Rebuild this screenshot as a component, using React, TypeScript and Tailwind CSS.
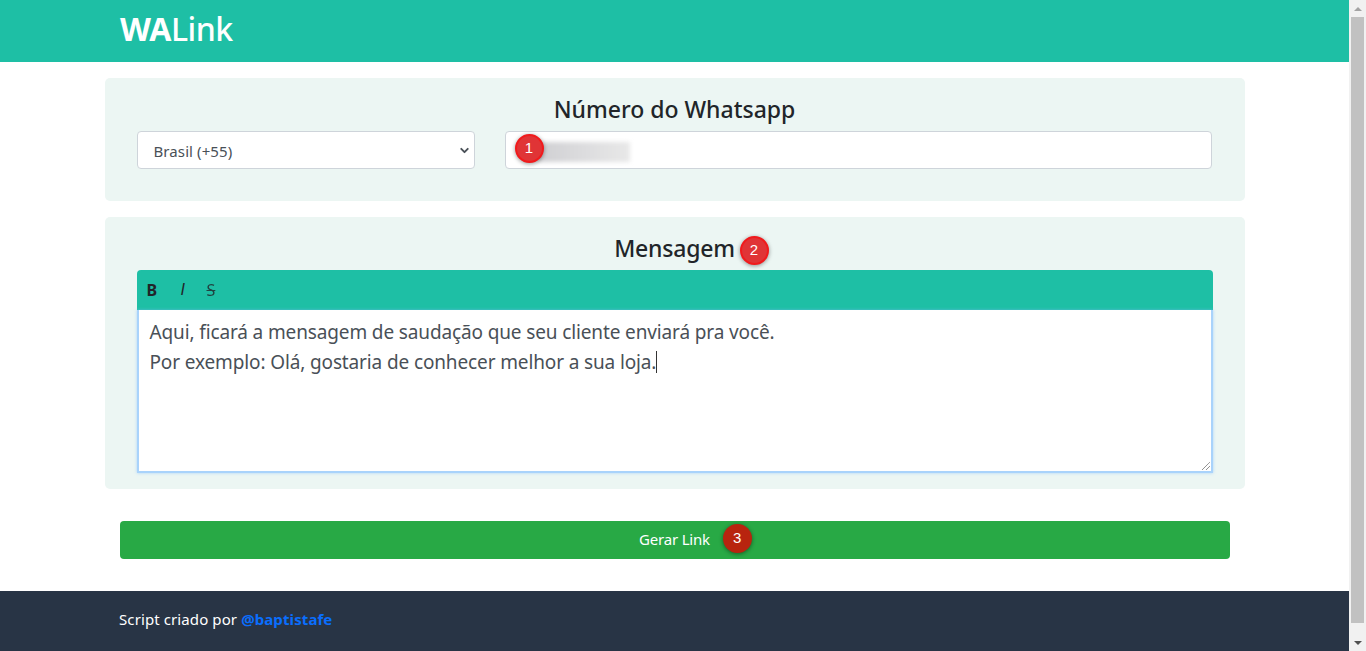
import { ChevronDown } from "lucide-react";

const FONT = "font-['Noto_Sans','Open_Sans',sans-serif]";

function StepBadge({ n, className }: { n: number; className: string }) {
  return (
    <span
      className={`absolute flex h-[29px] w-[29px] items-center justify-center rounded-full font-['Liberation_Sans',sans-serif] text-[15px] text-white ${className}`}
    >
      {n}
    </span>
  );
}

function Scrollbar() {
  return (
    <aside className="flex h-full w-[17px] shrink-0 flex-col items-center bg-[#f1f1f1]">
      <div className="flex h-[17px] w-full items-center justify-center">
        <span className="h-0 w-0 border-x-[4px] border-b-[4px] border-x-transparent border-b-[#a3a3a3]" />
      </div>
      <div className="h-[606px] w-[13px] shrink-0 bg-[#c1c1c1]" />
      <div className="flex-1" />
      <div className="flex h-[17px] w-full items-center justify-center">
        <span className="h-0 w-0 border-x-[4px] border-t-[4px] border-x-transparent border-t-[#505050]" />
      </div>
    </aside>
  );
}

export default function App() {
  return (
    <div className={`flex h-[651px] overflow-hidden bg-white ${FONT}`}>
      <div className="flex min-w-0 flex-1 flex-col">
        <header className="h-[62px] bg-[#1ebfa5] pl-[120px]">
          <h1 className="pt-[7px] text-[32px] leading-[44px] font-medium tracking-[-0.45px] text-white">
            <span className="font-bold">WA</span>Link
          </h1>
        </header>

        <main className="flex flex-col items-center pt-4">
          <section className="h-[123px] w-[1140px] rounded-[5px] bg-[#ecf6f3] px-8 pt-[16px]">
            <h2 className="text-center text-[23px] leading-[31px] font-medium text-[#212529]">
              Número do Whatsapp
            </h2>
            <div className="mt-[6px] flex gap-[30px]">
              <div className="relative w-[338px]">
                <select className="h-[38px] w-full appearance-none rounded border border-[#ced4da] bg-white pt-[2px] pl-4 text-[15px] tracking-[0.1px] text-[#495057] outline-none">
                  <option>Brasil (+55)</option>
                </select>
                <ChevronDown className="pointer-events-none absolute top-[13px] right-[4px] h-[13px] w-[13px] text-[#495057]" strokeWidth={3.5} />
              </div>
              <div className="relative h-[38px] w-[707px] rounded border border-[#ced4da] bg-white">
                <div className="absolute top-[10px] left-[30px] h-[20px] w-[94px] bg-gradient-to-r from-[#cfcfd2] via-[#dcdcde] to-[#e8e8e8] blur-[2px]" />
                <StepBadge n={1} className="top-[2px] left-[9px] border-2 border-[#f11a1c] bg-[#e03436] shadow-[0_1px_4px_rgba(0,0,0,0.4)]" />
              </div>
            </div>
          </section>

          <section className="mt-4 h-[272px] w-[1140px] rounded-[5px] bg-[#ecf6f3] px-8 pt-[16px]">
            <div className="relative">
              <h2 className="text-center text-[23px] leading-[31px] font-medium tracking-[-0.2px] text-[#212529]">
                Mensagem
              </h2>
              <StepBadge n={2} className="top-[3px] left-[603px] border-2 border-[#f11a1c] bg-[#e03436] shadow-[0_1px_4px_rgba(0,0,0,0.4)]" />
            </div>
            <div className="mt-[6px] w-[1076px]">
              <div className="flex h-10 items-center rounded-t bg-[#1ebfa5] pl-[10px] text-[16px] text-[#212529]">
                <b className="w-[33px]">B</b>
                <i className="w-[27px] pl-[1px] font-['Liberation_Sans',sans-serif]">I</i>
                <s className="opacity-80">S</s>
              </div>
              <div className="relative h-[163px] border-2 border-t-0 border-[#a9d3fb] bg-white px-[11px] pt-[7px] text-[19px] leading-[30px] tracking-[-0.13px] text-[#495057] shadow-[0_0_3px_rgba(128,189,255,0.6)]">
                <p>Aqui, ficará a mensagem de saudação que seu cliente enviará pra você.</p>
                <p>
                  Por exemplo: Olá, gostaria de conhecer melhor a sua loja.
                  <span className="inline-block h-[22px] w-px translate-y-[4px] bg-[#333]" />
                </p>
                <svg className="absolute right-0 bottom-0 h-[10px] w-[10px]" viewBox="0 0 10 10" aria-hidden="true">
                  <path d="M1 9 9 1M5 9 9 5" stroke="#666" strokeWidth="1" strokeDasharray="1 0.5" />
                </svg>
              </div>
            </div>
          </section>

          <div className="relative mt-8 flex h-[38px] w-[1110px] items-center justify-center rounded bg-[#28a945] pb-[2px] text-[15px] tracking-[-0.2px] text-white">
            Gerar Link
            <StepBadge n={3} className="top-[3px] left-[603px] bg-[#b8240f] shadow-[0_1px_4px_rgba(0,0,0,0.45)]" />
          </div>
        </main>

        <footer className="mt-8 flex h-[60px] items-center bg-[#283445] pb-[4px] pl-[119px] text-[15px] tracking-[0.1px] text-white">
          Script criado por&nbsp;<a className="font-bold text-[#0a6efd]">@baptistafe</a>
        </footer>
      </div>
      <Scrollbar />
    </div>
  );
}
